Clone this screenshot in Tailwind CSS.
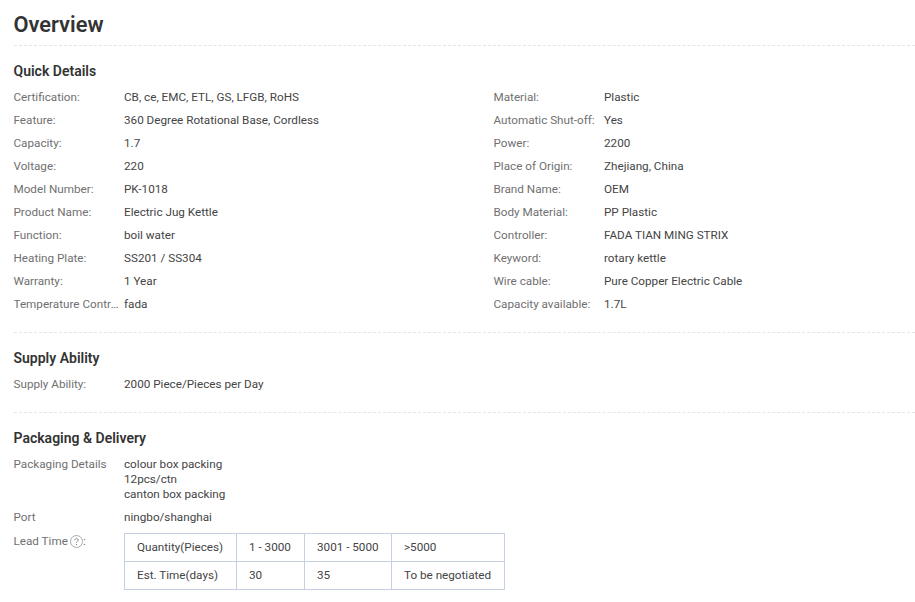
<!DOCTYPE html>
<html lang="en">
<head>
    <meta charset="UTF-8">
    <title>Overview</title>
    <script src="https://cdn.jsdelivr.net/npm/@tailwindcss/browser@4"></script>
</head>
<body class="bg-white font-['Roboto',sans-serif] text-[11.7px] leading-[15px] text-[#444] h-[602px] overflow-hidden">
    <div class="pl-[13.5px]">
        <!-- Overview -->
        <h1 class="h-[46px] pt-[11px] text-[21.8px] leading-[28px] font-semibold text-[#333] border-b border-dashed border-[#e5e5e5]">Overview</h1>

        <!-- Quick Details -->
        <section class="h-[287px] pt-[16px] border-b border-dashed border-[#e5e5e5]">
            <h2 class="text-[14px] leading-[18px] font-semibold text-[#333] mb-[6px]">Quick Details</h2>
            <div class="grid grid-cols-[480px_1fr]">
                <div>
                    <div class="flex h-[23px] items-center"><span class="w-[110.5px] shrink-0 text-[#707070]">Certification:</span><span>CB, ce, EMC, ETL, GS, LFGB, RoHS</span></div>
                    <div class="flex h-[23px] items-center"><span class="w-[110.5px] shrink-0 text-[#707070]">Feature:</span><span>360 Degree Rotational Base, Cordless</span></div>
                    <div class="flex h-[23px] items-center"><span class="w-[110.5px] shrink-0 text-[#707070]">Capacity:</span><span>1.7</span></div>
                    <div class="flex h-[23px] items-center"><span class="w-[110.5px] shrink-0 text-[#707070]">Voltage:</span><span>220</span></div>
                    <div class="flex h-[23px] items-center"><span class="w-[110.5px] shrink-0 text-[#707070]">Model Number:</span><span>PK-1018</span></div>
                    <div class="flex h-[23px] items-center"><span class="w-[110.5px] shrink-0 text-[#707070]">Product Name:</span><span>Electric Jug Kettle</span></div>
                    <div class="flex h-[23px] items-center"><span class="w-[110.5px] shrink-0 text-[#707070]">Function:</span><span>boil water</span></div>
                    <div class="flex h-[23px] items-center"><span class="w-[110.5px] shrink-0 text-[#707070]">Heating Plate:</span><span>SS201 / SS304</span></div>
                    <div class="flex h-[23px] items-center"><span class="w-[110.5px] shrink-0 text-[#707070]">Warranty:</span><span>1 Year</span></div>
                    <div class="flex h-[23px] items-center"><span class="w-[110.5px] shrink-0 text-[#707070] truncate pr-[3px]">Temperature Control:</span><span>fada</span></div>
                </div>
                <div>
                    <div class="flex h-[23px] items-center"><span class="w-[110.5px] shrink-0 text-[#707070]">Material:</span><span>Plastic</span></div>
                    <div class="flex h-[23px] items-center"><span class="w-[110.5px] shrink-0 text-[#707070]">Automatic Shut-off:</span><span>Yes</span></div>
                    <div class="flex h-[23px] items-center"><span class="w-[110.5px] shrink-0 text-[#707070]">Power:</span><span>2200</span></div>
                    <div class="flex h-[23px] items-center"><span class="w-[110.5px] shrink-0 text-[#707070]">Place of Origin:</span><span>Zhejiang, China</span></div>
                    <div class="flex h-[23px] items-center"><span class="w-[110.5px] shrink-0 text-[#707070]">Brand Name:</span><span>OEM</span></div>
                    <div class="flex h-[23px] items-center"><span class="w-[110.5px] shrink-0 text-[#707070]">Body Material:</span><span>PP Plastic</span></div>
                    <div class="flex h-[23px] items-center"><span class="w-[110.5px] shrink-0 text-[#707070]">Controller:</span><span>FADA TIAN MING STRIX</span></div>
                    <div class="flex h-[23px] items-center"><span class="w-[110.5px] shrink-0 text-[#707070]">Keyword:</span><span>rotary kettle</span></div>
                    <div class="flex h-[23px] items-center"><span class="w-[110.5px] shrink-0 text-[#707070]">Wire cable:</span><span>Pure Copper Electric Cable</span></div>
                    <div class="flex h-[23px] items-center"><span class="w-[110.5px] shrink-0 text-[#707070]">Capacity available:</span><span>1.7L</span></div>
                </div>
            </div>
        </section>

        <!-- Supply Ability -->
        <section class="h-[80px] pt-[16px] border-b border-dashed border-[#e5e5e5]">
            <h2 class="text-[14px] leading-[18px] font-semibold text-[#333] mb-[6px]">Supply Ability</h2>
            <div class="flex h-[23px] items-center"><span class="w-[110.5px] shrink-0 text-[#707070]">Supply Ability:</span><span>2000 Piece/Pieces per Day</span></div>
        </section>

        <!-- Packaging -->
        <section class="pt-[16px]">
            <h2 class="text-[14px] leading-[18px] font-semibold text-[#333] mb-[10px]">Packaging &amp; Delivery</h2>
            <div class="flex">
                <span class="w-[110.5px] shrink-0 text-[#707070]">Packaging Details</span>
                <span>colour box packing<br>12pcs/ctn<br>canton box packing</span>
            </div>
            <div class="flex mt-[8px]">
                <span class="w-[110.5px] shrink-0 text-[#707070]">Port</span>
                <span>ningbo/shanghai</span>
            </div>
            <div class="flex mt-[8px]">
                <span class="w-[110.5px] shrink-0 text-[#707070] flex items-start pt-[1px]">Lead Time
                    <svg class="ml-[2px] mt-[1px]" width="13" height="13" viewBox="0 0 13 13" fill="none">
                        <circle cx="6.5" cy="6.5" r="6" stroke="#aaa"/>
                        <path d="M4.8 5.2c0-1 .8-1.6 1.7-1.6s1.7.6 1.7 1.5c0 1.2-1.7 1.3-1.7 2.6" stroke="#888"/>
                        <path d="M6.5 9v1.2" stroke="#888"/>
                    </svg>:</span>
                <table class="border-collapse border border-[#c5d0e3] h-[57px]">
                    <tbody>
                        <tr class="h-[28px]">
                            <td class="w-[112px] pl-[12px] border border-[#c5d0e3]">Quantity(Pieces)</td>
                            <td class="w-[68px] pl-[12px] border border-[#c5d0e3]">1 - 3000</td>
                            <td class="w-[87px] pl-[12px] border border-[#c5d0e3]">3001 - 5000</td>
                            <td class="w-[113px] pl-[12px] border border-[#c5d0e3]">&gt;5000</td>
                        </tr>
                        <tr class="h-[28px]">
                            <td class="pl-[12px] border border-[#c5d0e3]">Est. Time(days)</td>
                            <td class="pl-[12px] border border-[#c5d0e3]">30</td>
                            <td class="pl-[12px] border border-[#c5d0e3]">35</td>
                            <td class="pl-[12px] border border-[#c5d0e3]">To be negotiated</td>
                        </tr>
                    </tbody>
                </table>
            </div>
        </section>
    </div>
</body>
</html>
